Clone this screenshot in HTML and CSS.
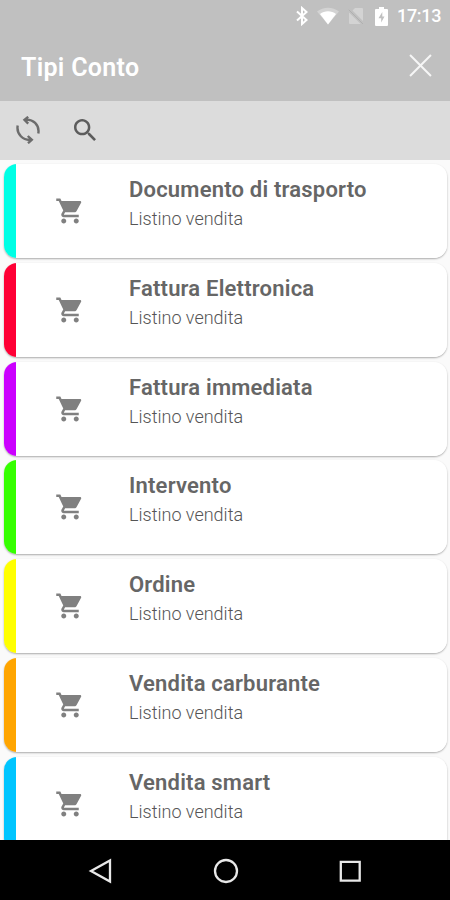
FILE: index.html
```html
<!DOCTYPE html>
<html lang="it">
<head>
<meta charset="utf-8">
<title>Tipi Conto</title>
<link rel="stylesheet" href="styles.css">
</head>
<body>
<svg class="defs" width="0" height="0">
  <symbol id="cart" viewBox="0 0 24 24"><path d="M7 18c-1.1 0-1.99.9-1.99 2S5.900 22 7 22s2-.9 2-2-.9-2-2-2zM1 2v2h2l3.600 7.590-1.350 2.450c-.16.28-.25.61-.25.960 0 1.100.9 2 2 2h12v-2H7.420c-.14 0-.25-.11-.25-.25l.03-.12.9-1.630h7.450c.75 0 1.410-.41 1.750-1.030l3.580-6.490c.08-.14.120-.31.120-.48 0-.55-.45-1-1-1H5.210l-.94-2H1zm16 16c-1.100 0-1.990.9-1.990 2s.89 2 1.990 2 2-.9 2-2-.9-2-2-2z"/></symbol>
</svg>
<header class="header">
  <div class="status">
    <svg class="bt" viewBox="0 0 12 20"><path d="M1 5.500 10.500 14 6 18V2l4.500 4L1 14.500"/></svg>
    <svg class="wifi" viewBox="0 0 22 18"><path class="faint" d="M0 4.500C6-.6 16-.6 22 4.500L11 17.500z"/><path d="M3 7c4.500-3.700 11.500-3.700 16 0l-8 10.500z"/></svg>
    <svg class="sim" viewBox="0 0 16 18"><path class="faint" d="M7 1h7q1 0 1 1v12L4.500 3.500zM1 5.500 12.800 17H2q-1 0-1-1z"/><path class="slash" d="M.8 2.800 15 17"/></svg>
    <svg class="battery" viewBox="0 0 13 19"><path fill-rule="evenodd" d="M4 0h5v2h3q1 0 1 1v15q0 1-1 1H1q-1 0-1-1V3q0-1 1-1h3zM7.300 5 3.500 11.300h2.700V15.500L9.500 9.500H7.300z"/></svg>
    <span class="time">17:13</span>
  </div>
  <div class="titlebar">
    <h1>Tipi Conto</h1>
    <svg class="close" viewBox="0 0 22 22"><path d="m1 1 20 20M21 1 1 21"/></svg>
  </div>
</header>
<div class="toolbar">
  <svg class="sync" viewBox="0 0 24 28"><path class="arc" d="M8.500 3.800C17 2.500 23.800 9 22.300 17.500M1.700 9.500C.2 18 7 24.900 15.500 23.800M12.200 .8 8.500 3.900 12.200 7.600M11.800 20 15.800 23.800 12 27.200"/></svg>
  <svg class="search" viewBox="3 3 17.490 17.490"><path d="M15.500 14h-.79l-.28-.27C15.410 12.590 16 11.110 16 9.500 16 5.910 13.090 3 9.500 3S3 5.910 3 9.500 5.910 16 9.500 16c1.610 0 3.090-.59 4.230-1.570l.27.28v.79l5 4.990L20.490 19l-4.990-5zm-6 0C7.010 14 5 11.990 5 9.500S7.010 5 9.500 5 14 7.010 14 9.500 11.990 14 9.500 14z"/></svg>
</div>
<main class="list">
  <article class="card cyan"><svg class="cart"><use href="#cart"/></svg><div><h2>Documento di trasporto</h2><p>Listino vendita</p></div></article>
  <article class="card red"><svg class="cart"><use href="#cart"/></svg><div><h2>Fattura Elettronica</h2><p>Listino vendita</p></div></article>
  <article class="card purple"><svg class="cart"><use href="#cart"/></svg><div><h2>Fattura immediata</h2><p>Listino vendita</p></div></article>
  <article class="card green"><svg class="cart"><use href="#cart"/></svg><div><h2>Intervento</h2><p>Listino vendita</p></div></article>
  <article class="card yellow"><svg class="cart"><use href="#cart"/></svg><div><h2>Ordine</h2><p>Listino vendita</p></div></article>
  <article class="card orange"><svg class="cart"><use href="#cart"/></svg><div><h2>Vendita carburante</h2><p>Listino vendita</p></div></article>
  <article class="card blue"><svg class="cart"><use href="#cart"/></svg><div><h2>Vendita smart</h2><p>Listino vendita</p></div></article>
</main>
<nav class="nav">
  <svg viewBox="0 0 26 26"><path d="M22 2.500v21L3 13z"/></svg>
  <svg viewBox="0 0 26 26"><circle cx="13" cy="13" r="11"/></svg>
  <svg viewBox="0 0 26 26"><path d="M3.800 3.800h18.900v18.900H3.800z"/></svg>
</nav>
</body>
</html>
```
FILE: styles.css
```css
* { box-sizing: border-box; }
body {
  margin: 0;
  width: 450px;
  height: 900px;
  overflow: hidden;
  display: flex;
  flex-direction: column;
  background: #fafafa;
  font-family: Roboto, "Liberation Sans", sans-serif;
}
h1, h2, p { margin: 0; white-space: nowrap; }
svg { display: block; flex: none; }
.defs { position: absolute; }
.header { height: 101px; flex: none; background: #c0c0c0; color: #fff; }
.status {
  height: 32px;
  display: flex;
  align-items: center;
  justify-content: flex-end;
  padding-right: 10px;
  fill: #fff;
}
.faint { opacity: .3; }
.bt { width: 12px; height: 20px; fill: none; stroke: #fff; stroke-width: 2; margin-right: 9px; }
.wifi { width: 22px; height: 18px; margin-right: 9px; }
.sim { width: 16px; height: 18px; margin-right: 11px; }
.slash { stroke: #b0b0b0; stroke-width: 1; }
.battery { width: 13px; height: 19px; margin-right: 9px; }
.time { font-size: 18px; font-weight: 500; line-height: 32px; width: 43px; letter-spacing: -.3px; white-space: nowrap; }
.titlebar {
  height: 69px;
  display: flex;
  align-items: center;
  justify-content: space-between;
  padding: 0 18px 1px 21px;
}
h1 { font-size: 25px; font-weight: 600; letter-spacing: .3px; line-height: 32px; margin-top: 3px; }
.close { width: 23px; height: 23px; margin-top: -1px; fill: none; stroke: #f6f6f6; stroke-width: 1.900; }
.toolbar {
  height: 59px;
  flex: none;
  display: flex;
  align-items: center;
  padding-left: 16px;
  background: #dcdcdc;
  fill: #5c5c5c;
}
.sync { width: 24px; height: 28px; margin: -1px 34px 0 0; }
.arc { fill: none; stroke: #6c6c6c; stroke-width: 2.400; }
.search { width: 22px; height: 22px; margin-top: -1px; }
.list {
  flex: 1;
  min-height: 0;
  overflow: hidden;
  display: flex;
  flex-direction: column;
  gap: 4.800px;
  padding: 4px 3px 0 4px;
}
.card {
  height: 94px;
  flex: none;
  display: flex;
  align-items: flex-start;
  border-radius: 13px;
  background: linear-gradient(to right, var(--tag) 12.500px, #fff 12.500px);
  box-shadow: 0 1px 2px rgba(0, 0, 0, .32);
  color: #666;
}
.cyan { --tag: #00ffe5; }
.red { --tag: #ff0035; }
.purple { --tag: #cb00ff; }
.green { --tag: #35ff00; }
.yellow { --tag: #ffff00; }
.orange { --tag: #ffa500; }
.blue { --tag: #00c5ff; }
.cart { width: 30px; height: 30px; margin: 32px 44px 0 51px; fill: #808080; }
h2 { font-size: 22px; font-weight: 600; line-height: 28px; margin-top: 12px; letter-spacing: .2px; }
p { font-size: 18px; font-weight: 300; line-height: 22px; margin-top: 4px; letter-spacing: 0; color: #555; }
.nav {
  height: 60px;
  flex: none;
  display: flex;
  align-items: center;
  justify-content: space-between;
  padding: 0 87px 0 88px;
  background: #000;
}
.nav svg { width: 26px; height: 26px; margin-top: 1px; fill: none; stroke: #e8e8e8; stroke-width: 2.300; }
```
